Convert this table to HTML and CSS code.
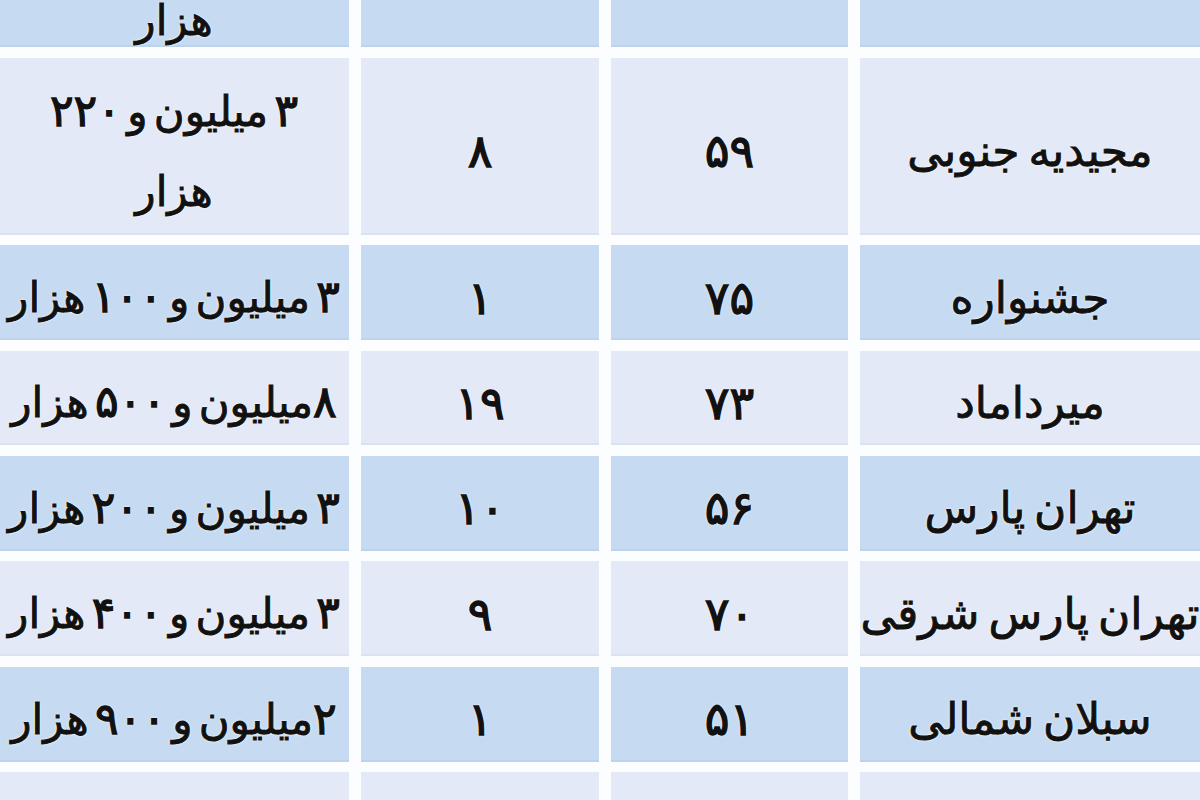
FILE: index.html
```html
<!DOCTYPE html>
<html lang="fa" dir="rtl">
<head>
<meta charset="utf-8">
<title>جدول قیمت</title>
<link rel="stylesheet" href="styles.css">
</head>
<body>
<div class="table">
  <div class="cell blue name top"></div>
  <div class="cell blue num top"></div>
  <div class="cell blue num top"></div>
  <div class="cell blue price top"><span class="t">هزار</span></div>

  <div class="cell light name"><span class="t">مجیدیه جنوبی</span></div>
  <div class="cell light num"><span class="t">۵۹</span></div>
  <div class="cell light num"><span class="t">۸</span></div>
  <div class="cell light price"><span class="t two"><span class="d">۳</span> میلیون و <span class="d">۲۲۰</span><br>هزار</span></div>

  <div class="cell blue name"><span class="t">جشنواره</span></div>
  <div class="cell blue num"><span class="t">۷۵</span></div>
  <div class="cell blue num"><span class="t">۱</span></div>
  <div class="cell blue price"><span class="t"><span class="d">۳</span> میلیون و <span class="d">۱۰۰</span> هزار</span></div>

  <div class="cell light name"><span class="t">میرداماد</span></div>
  <div class="cell light num"><span class="t">۷۳</span></div>
  <div class="cell light num"><span class="t">۱۹</span></div>
  <div class="cell light price"><span class="t"><span class="d">۸</span>میلیون و <span class="d">۵۰۰</span> هزار</span></div>

  <div class="cell blue name"><span class="t">تهران پارس</span></div>
  <div class="cell blue num"><span class="t">۵۶</span></div>
  <div class="cell blue num"><span class="t">۱۰</span></div>
  <div class="cell blue price"><span class="t"><span class="d">۳</span> میلیون و <span class="d">۲۰۰</span> هزار</span></div>

  <div class="cell light name"><span class="t">تهران پارس شرقی</span></div>
  <div class="cell light num"><span class="t">۷۰</span></div>
  <div class="cell light num"><span class="t">۹</span></div>
  <div class="cell light price"><span class="t"><span class="d">۳</span> میلیون و <span class="d">۴۰۰</span> هزار</span></div>

  <div class="cell blue name"><span class="t">سبلان شمالی</span></div>
  <div class="cell blue num"><span class="t">۵۱</span></div>
  <div class="cell blue num"><span class="t">۱</span></div>
  <div class="cell blue price"><span class="t"><span class="d">۲</span>میلیون و <span class="d">۹۰۰</span> هزار</span></div>

  <div class="cell light name"></div>
  <div class="cell light num"></div>
  <div class="cell light num"></div>
  <div class="cell light price"></div>
</div>
</body>
</html>
```

FILE: styles.css
```css
html, body {
  margin: 0;
  padding: 0;
  background: #fcfdff;
  overflow: hidden;
  width: 1200px;
  height: 800px;
}

.table {
  direction: rtl;
  width: 1202px;
  height: 848px;
  overflow: hidden;
  margin-top: -48px;
  display: grid;
  grid-template-columns: 340px 237px 238px 350px;
  grid-template-rows: 95px 177px;
  grid-auto-rows: 94.8px;
  column-gap: 12px;
  row-gap: 10.6px;
  font-family: "DejaVu Sans", sans-serif;
  font-weight: normal;
  font-size: 42px;
  color: #111;
}

.cell {
  display: flex;
  align-items: center;
  justify-content: center;
  min-width: 0;
  box-sizing: border-box;
  padding-top: 10px;
}

.blue {
  background: #c6dbf2;
  box-shadow: inset 0 -2px 0 #bdd3ec;
}

.light {
  background: #e3e9f6;
  box-shadow: inset 0 -2px 0 #dae1f0;
}

.t {
  display: block;
  width: 100%;
  text-align: center;
  white-space: nowrap;
  line-height: 48px;
  -webkit-text-stroke: 0.9px #111;
  text-shadow: 0 0 3px #fff, 0 0 2px #fff;
}

.name .t {
  font-size: 44px;
  word-spacing: -5px;
}

.price .t {
  word-spacing: -7px;
}

.num .t {
  font-size: 46px;
  -webkit-text-stroke: 1.4px #111;
}

.d {
  font-size: 44px;
  -webkit-text-stroke: 1.3px #111;
}

.t.two {
  line-height: 80px;
}

.top {
  align-items: flex-end;
  padding-top: 0;
  padding-bottom: 2px;
}
```
